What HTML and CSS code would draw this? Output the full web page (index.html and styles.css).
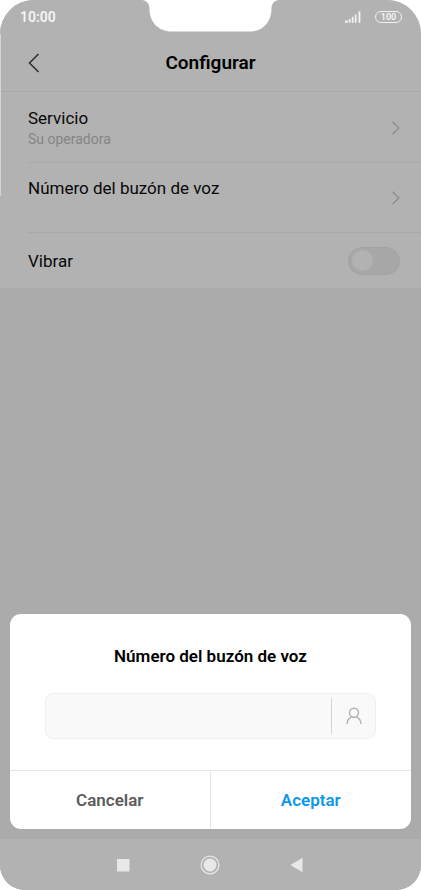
FILE: index.html
```html
<!DOCTYPE html>
<html lang="es">
<head>
  <meta charset="utf-8">
  <meta name="viewport" content="width=device-width, initial-scale=1">
  <title>Configurar</title>
  <link rel="stylesheet" href="styles.css">
</head>
<body>
  <div class="phone">
    <svg class="notch" width="139" height="32" viewBox="0 0 139 32" aria-hidden="true">
      <path d="M1 0C6 1 8 4 8 9C8 22 17 31.500 30 31.500H109C121 31.500 130 22 130 9C130 4 132 1 137 0Z" fill="#fff"/>
    </svg>
    <div class="status">
      <time class="clock">10:00</time>
      <div class="indicators">
        <svg width="16" height="12" viewBox="0 0 16 12" fill="#f2f2f2" aria-hidden="true">
          <path d="M0 9.500h2.700v2.200H0zM3.700 8h1.800v3.700H3.700zM6.800 5.800h1.700v5.900H6.800zM9.800 3.500h1.700v8.200H9.800zM13.500 0.500h1.900v11.200h-1.900z"/>
        </svg>
        <span class="battery">100</span>
      </div>
    </div>
    <header class="appbar">
      <button class="back" type="button" aria-label="Atrás">
        <svg width="12" height="20" viewBox="0 0 12 20" fill="none" stroke="#2b2b2b" stroke-width="1.500" aria-hidden="true"><path d="M10.500 1L1.500 10L10.500 19"/></svg>
      </button>
      <h1>Configurar</h1>
    </header>
    <main class="settings">
      <a class="row" href="#servicio">
        <span class="text"><span>Servicio</span><small>Su operadora</small></span>
        <svg class="chevron" width="9" height="14" viewBox="0 0 9 14" aria-hidden="true"><path d="M1.500 0.800L8 7L1.500 13.200"/></svg>
      </a>
      <a class="row" href="#buzon">
        <span class="text"><span>Número del buzón de voz</span><small></small></span>
        <svg class="chevron" width="9" height="14" viewBox="0 0 9 14" aria-hidden="true"><path d="M1.500 0.800L8 7L1.500 13.200"/></svg>
      </a>
      <label class="row toggle-row">
        <span>Vibrar</span>
        <input class="toggle" type="checkbox" role="switch">
      </label>
    </main>
    <form class="dialog" role="dialog" aria-labelledby="dialog-title">
      <h2 id="dialog-title">Número del buzón de voz</h2>
      <div class="field">
        <input type="tel" aria-labelledby="dialog-title">
        <button class="contact" type="button" aria-label="Contactos">
          <svg width="16" height="18" viewBox="0 0 16 18" fill="none" stroke="#b0b0b0" stroke-width="1.400" aria-hidden="true"><circle cx="8" cy="5.700" r="4.500"/><path d="M1 17C1.200 13.500 3 10.800 5.600 9.800M10.400 9.800C13 10.800 14.800 13.500 15 17"/></svg>
        </button>
      </div>
      <div class="actions">
        <button class="cancel" type="button">Cancelar</button>
        <button class="accept" type="button">Aceptar</button>
      </div>
    </form>
    <nav class="navbar">
      <button type="button" aria-label="Recientes"><svg width="20" height="20" viewBox="0 0 20 20" aria-hidden="true"><path d="M4 4h12.500v12.500H4z" fill="#e8e8e8"/></svg></button>
      <button type="button" aria-label="Inicio"><svg width="20" height="20" viewBox="0 0 20 20" aria-hidden="true"><circle cx="10" cy="10" r="8.900" fill="none" stroke="#e8e8e8" stroke-width="1.200"/><circle cx="10" cy="10" r="6.500" fill="#e8e8e8"/></svg></button>
      <button type="button" aria-label="Volver"><svg width="20" height="20" viewBox="0 0 20 20" aria-hidden="true"><path d="M3.500 10L15.500 2.800V17.200Z" fill="#e8e8e8"/></svg></button>
    </nav>
  </div>
</body>
</html>
```
FILE: styles.css
```css
* {
  box-sizing: border-box;
}

body {
  margin: 0;
  background: #fff;
  color: #080808;
  font: 17px/20px Roboto, sans-serif;
}

button {
  padding: 0;
  border: 0;
  background: none;
  font: inherit;
}

svg {
  display: block;
}

h1,
h2 {
  margin: 0;
  color: #000;
  text-align: center;
}

.phone {
  position: relative;
  display: flex;
  flex-direction: column;
  min-height: 100vh;
  overflow: hidden;
  border-radius: 34px 34px 25px 25px;
  background: #ababab;
}

.phone::before {
  content: "";
  position: absolute;
  top: 34px;
  left: 0;
  width: 1px;
  height: 162px;
  background: #d4d4d4;
}

.notch {
  position: absolute;
  top: 0;
  left: 50%;
  transform: translateX(-50%);
}

.status {
  display: flex;
  align-items: center;
  justify-content: space-between;
  height: 34px;
  padding: 0 19px 0 20px;
  background: #b2b2b2;
  color: #f5f5f5;
}

.clock {
  font-size: 14px;
  font-weight: 600;
}

.indicators {
  display: flex;
  align-items: center;
  gap: 14px;
}

.battery {
  width: 27px;
  border: 1px solid #f0f0f0;
  border-radius: 6px;
  font-size: 9px;
  font-weight: 600;
  line-height: 10px;
  text-align: center;
}

.appbar {
  display: grid;
  grid-template-columns: 40px 1fr 40px;
  align-items: center;
  height: 58px;
  padding: 0 14px;
  border-bottom: 1px solid #a9a9a9;
  background: #b2b2b2;
}

.back {
  display: grid;
  place-items: center;
  height: 40px;
}

h1 {
  font-size: 19px;
  font-weight: 600;
}

.settings {
  padding: 1px 0 0 28px;
  background: #b2b2b2;
}

.row {
  display: flex;
  align-items: center;
  justify-content: space-between;
  height: 70px;
  padding-right: 21px;
  border-bottom: 1px solid #a9a9a9;
  color: inherit;
  text-decoration: none;
}

.text {
  display: grid;
  padding-top: 3px;
}

.text small {
  min-height: 22px;
  color: #858585;
  font-size: 14px;
  line-height: 22px;
}

.chevron {
  fill: none;
  stroke: #8c8c8c;
  stroke-width: 1.2;
}

.toggle-row {
  height: 55px;
  border: 0;
}

.toggle {
  display: flex;
  align-items: center;
  appearance: none;
  width: 52px;
  height: 28px;
  margin: 0;
  padding: 0 3px;
  border: 1px solid #a2a2a2;
  border-radius: 14px;
  background: #a7a7a7;
}

.toggle::before {
  content: "";
  width: 21px;
  height: 21px;
  border-radius: 50%;
  background: #b2b2b2;
}

.toggle:checked::before {
  margin-left: auto;
}

.dialog {
  margin: auto 10px 10px;
  overflow: hidden;
  border-radius: 11px;
  background: #fff;
}

h2 {
  padding-top: 32px;
  font-size: 17px;
  font-weight: 600;
}

.field {
  display: flex;
  height: 46px;
  margin: 27px 35px 31px;
  border: 1px solid #f0f0f0;
  border-radius: 8px;
  background: #f9f9f9;
}

.field input {
  flex: 1;
  min-width: 0;
  padding: 0 12px;
  border: 0;
  background: none;
  font: inherit;
}

.contact {
  display: grid;
  place-items: center;
  width: 44px;
  margin: 4px 0;
  border-left: 1px solid #d6d6d6;
}

.actions {
  display: grid;
  grid-template-columns: 1fr 1fr;
  border-top: 1px solid #e6e6e6;
}

.actions button {
  height: 58px;
  font-size: 17px;
  font-weight: 600;
}

.actions .cancel {
  border-right: 1px solid #e6e6e6;
  color: #5c5c5c;
}

.actions .accept {
  color: #0d97ec;
}

.navbar {
  display: flex;
  align-items: center;
  justify-content: center;
  gap: 67px;
  height: 51px;
  padding-right: 1px;
  background: #b2b2b2;
}
```
